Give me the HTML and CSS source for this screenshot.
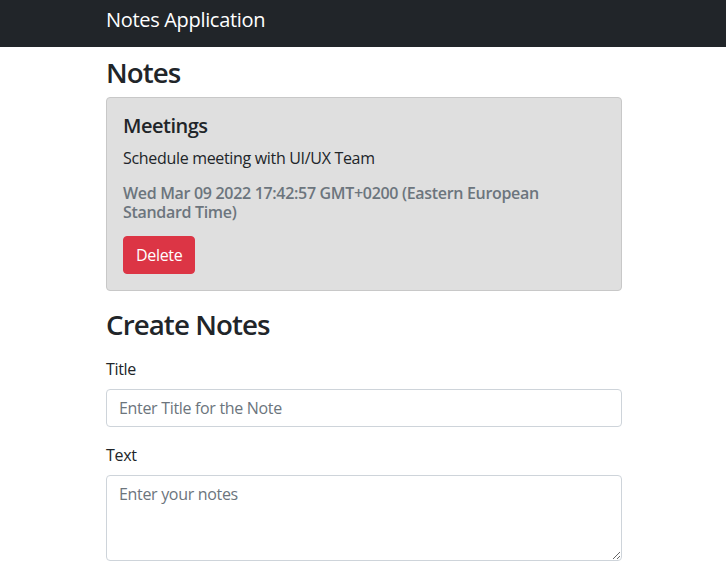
FILE: index.html
```html
<!DOCTYPE html>
<html lang="en">
<head>
<meta charset="utf-8">
<title>Notes Application</title>
<link rel="stylesheet" href="styles.css">
</head>
<body>
<nav class="navbar">
  <div class="container">
    <span class="brand">Notes Application</span>
  </div>
</nav>
<main class="container">
  <h2 class="heading notes-heading">Notes</h2>
  <div class="card">
    <h5 class="card-title">Meetings</h5>
    <p class="card-text">Schedule meeting with UI/UX Team</p>
    <h6 class="card-subtitle">Wed Mar 09 2022 17:42:57 GMT+0200 (Eastern European Standard Time)</h6>
    <button class="btn-delete" type="button">Delete</button>
  </div>
  <h2 class="heading create-heading">Create Notes</h2>
  <form class="note-form">
    <div class="field">
      <label class="form-label" for="title">Title</label>
      <input class="form-control" id="title" type="text" placeholder="Enter Title for the Note">
    </div>
    <div class="field">
      <label class="form-label" for="text">Text</label>
      <textarea class="form-control" id="text" rows="3" placeholder="Enter your notes"></textarea>
    </div>
  </form>
</main>
</body>
</html>
```
FILE: styles.css
```css
* { box-sizing: border-box; }
html, body { margin: 0; padding: 0; }
body {
  font-family: "Open Sans", "Noto Sans", sans-serif;
  font-size: 16px;
  line-height: 1.5;
  color: #212529;
  background: #fff;
  letter-spacing: -0.02em;
}
.container {
  width: 540px;
  margin: 0 auto;
  padding: 0 11px 0 13px;
}
.navbar {
  background: #212529;
  height: 47px;
  padding-top: 5px;
}
.brand {
  color: #fff;
  font-size: 20px;
  line-height: 30px;
  display: block;
}
.heading {
  font-size: 27.7px;
  line-height: 1.2;
  font-weight: 600;
  letter-spacing: -0.033em;
  margin: 0;
}
.notes-heading { margin: 9px 0 8px; }
.create-heading { margin: 17px 0 16px; }
.card {
  background: #dfdfdf;
  border: 1px solid #c8c8c8;
  border-radius: 4px;
  padding: 16px;
}
.card-title {
  font-size: 20px;
  line-height: 24px;
  font-weight: 600;
  letter-spacing: -0.025em;
  margin: 0 0 8px;
}
.card-text { margin: 0 0 14px; }
.card-subtitle {
  font-size: 16px;
  line-height: 19px;
  font-weight: 600;
  color: #6c757d;
  margin: 0 0 14px;
}
.btn-delete {
  font-family: inherit;
  letter-spacing: inherit;
  font-size: 16px;
  line-height: 24px;
  padding: 6px 12px;
  color: #fff;
  background: #dc3545;
  border: 1px solid #dc3545;
  border-radius: 4px;
  display: block;
}
.field { margin-bottom: 16px; }
.form-label {
  display: block;
  margin-bottom: 8px;
}
.form-control {
  display: block;
  width: 100%;
  font-family: inherit;
  letter-spacing: inherit;
  font-size: 16px;
  line-height: 24px;
  padding: 6px 12px;
  color: #212529;
  background: #fff;
  border: 1px solid #ced4da;
  border-radius: 4px;
}
textarea.form-control { height: 86px; resize: vertical; }
.form-control::placeholder { color: #6c757d; opacity: 1; }
```
